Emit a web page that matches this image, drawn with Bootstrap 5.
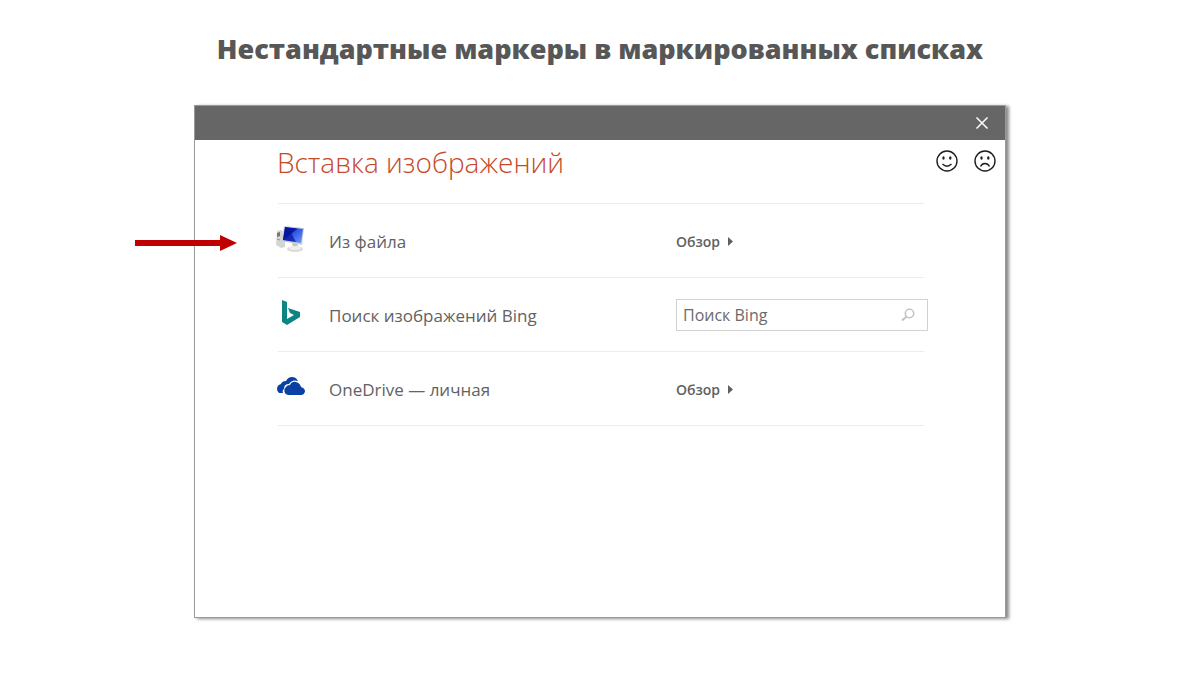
<!DOCTYPE html>
<html lang="ru">
<head>
<meta charset="utf-8">
<meta name="viewport" content="width=device-width, initial-scale=1">
<title>Нестандартные маркеры в маркированных списках</title>
<link href="https://cdn.jsdelivr.net/npm/bootstrap@5.3.0/dist/css/bootstrap.min.css" rel="stylesheet">
<style>
  body { font-family: "Open Sans", "Noto Sans", sans-serif; color: #626262; background: #fff; }
  .page-title { font-family: "Open Sans", sans-serif; font-weight: 800; font-size: 27px; line-height: 40px; color: #575757; margin-bottom: 36px; padding-top: 29px; }
  .insert-dialog { max-width: 812px; min-height: 513px; border: 1px solid #9a9a9a; box-shadow: 3px 1px 3px rgba(0, 0, 0, .45); }
  .title-bar { height: 34px; background: #666; }
  .plain-btn { border: 0; background: none; padding: 0; color: inherit; line-height: 0; }
  .dialog-title { font-weight: 300; font-size: 28px; line-height: 40px; color: #c8482a; }
  .dialog-head { padding: 2px 9px 0 82px; min-height: 63px; }
  .faces { gap: 16px; padding-top: 7px; color: #1c1c1c; }
  .sources { padding: 0 81px 0 83px; }
  .source-item { height: 74px; border-bottom: 1px solid #ececec; }
  .sources ul { border-top: 1px solid #ececec; }
  .source-icon { width: 53px; line-height: 0; margin-left: -2px; padding-bottom: 4px; }
  .source-name { font-size: 17px; line-height: 24px; padding-top: 2px; }
  .source-action { width: 248px; }
  .browse { font-weight: 600; font-size: 14px; line-height: 20px; color: #606060; gap: 8px; padding-top: 2px; }
  .search-box { width: 252px; height: 32px; border: 1px solid #d2d2d2; }
  .search-box input { border: 0; outline: 0; padding: 0 0 0 6px; font-size: 16px; line-height: 24px; min-width: 0; color: #6a6a6a; }
  .search-box input::placeholder { color: #6a6a6a; opacity: 1; }
  .pointer { left: -143px; top: 30px; }
</style>
</head>
<body>
<main class="container-fluid px-3 pb-4">
  <h1 class="page-title text-center">Нестандартные маркеры в маркированных списках</h1>
  <section class="insert-dialog mx-auto bg-white" aria-labelledby="dialogTitle">
    <div class="title-bar d-flex justify-content-end align-items-center pe-3">
      <button class="plain-btn text-white" type="button" aria-label="Закрыть">
        <svg width="14" height="14" viewBox="0 0 14 14"><path d="M1.500 1.500 12.500 12.500M12.500 1.500 1.500 12.500" stroke="currentColor" stroke-width="1.500" fill="none"/></svg>
      </button>
    </div>
    <div class="dialog-head d-flex justify-content-between align-items-start">
      <h2 id="dialogTitle" class="dialog-title mb-0">Вставка изображений</h2>
      <div class="faces d-flex">
        <button class="plain-btn" type="button" aria-label="Нравится">
          <svg width="22" height="24" viewBox="0 0 22 24" fill="none" stroke="currentColor" stroke-width="1.400"><circle cx="11" cy="12" r="10"/><ellipse cx="7.500" cy="9" rx="1.200" ry="1.700" fill="currentColor" stroke="none"/><ellipse cx="14.300" cy="9" rx="1.200" ry="1.700" fill="currentColor" stroke="none"/><path d="M6.500 15Q11 19.500 15.500 15"/></svg>
        </button>
        <button class="plain-btn" type="button" aria-label="Не нравится">
          <svg width="22" height="24" viewBox="0 0 22 24" fill="none" stroke="currentColor" stroke-width="1.400"><circle cx="11" cy="12" r="10"/><ellipse cx="7.500" cy="9" rx="1.200" ry="1.700" fill="currentColor" stroke="none"/><ellipse cx="14.300" cy="9" rx="1.200" ry="1.700" fill="currentColor" stroke="none"/><path d="M6.500 17.500Q8 14.500 11 14.500T15.500 17.500"/></svg>
        </button>
      </div>
    </div>
    <div class="sources">
      <ul class="list-unstyled mb-0">
        <li class="source-item d-flex align-items-center position-relative">
          <svg class="pointer position-absolute" width="102" height="18" viewBox="0 0 102 18" aria-hidden="true"><path d="M0 6H85V1L102 9 85 17V12H0Z" fill="#c00000"/></svg>
          <span class="source-icon">
            <svg width="29" height="28" viewBox="0 0 29 28">
              <defs><linearGradient id="screen" x1="0" y1="0" x2="1" y2="1"><stop offset="0" stop-color="#0a1fae"/><stop offset=".38" stop-color="#0818a0"/><stop offset=".45" stop-color="#2f55e8"/><stop offset="1" stop-color="#6d9af5"/></linearGradient></defs>
              <path d="M1 6 5 5 9 8V22L5 23 0 20Z" fill="#d5d5d2"/><path d="M1 8 4 7V11L1 12Z" fill="#76766f"/><path d="M1 14 4 15" stroke="#999"/>
              <ellipse cx="19" cy="24" rx="8" ry="3" fill="#d9d9d7"/><path d="M16 17 22 18 21 24H17Z" fill="#c4c5c8"/><ellipse cx="19" cy="23" rx="6" ry="2" fill="#eeeeec"/>
              <path d="M8 1 28 3 26 20 6 16Z" fill="#c9cedc"/><path d="M9 2 27 4 25 18 7 15Z" fill="url(#screen)"/><path d="M9 2 14 3Q16 11 20 17L7 15Z" fill="#08149a" opacity=".7"/>
            </svg>
          </span>
          <span class="source-name flex-grow-1">Из файла</span>
          <div class="source-action">
            <button class="plain-btn browse d-flex align-items-center" type="button">Обзор <svg width="5" height="9" viewBox="0 0 5 9"><path d="M0 0 5 4.500 0 9Z" fill="currentColor"/></svg></button>
          </div>
        </li>
        <li class="source-item d-flex align-items-center">
          <span class="source-icon">
            <svg width="29" height="28" viewBox="0 0 29 28"><path d="M6 1 11 3V20L18 16 14 14 12 9 24 13V18L11 26 6 23Z" fill="#0c8484"/></svg>
          </span>
          <label class="source-name flex-grow-1" for="bingQuery">Поиск изображений Bing</label>
          <div class="source-action">
            <form class="search-box d-flex align-items-center" onsubmit="return false">
              <input id="bingQuery" class="flex-grow-1 bg-transparent" type="text" placeholder="Поиск Bing">
              <button class="plain-btn pe-2 me-1" type="submit" aria-label="Найти"><svg width="14" height="14" viewBox="0 0 14 14" fill="none" stroke="#c3c3c3"><circle cx="8.500" cy="5.500" r="4.200" stroke-width="1.500"/><path d="M5.500 8.500 1 12.500" stroke-width="2"/></svg></button>
            </form>
          </div>
        </li>
        <li class="source-item d-flex align-items-center">
          <span class="source-icon">
            <svg width="29" height="28" viewBox="0 0 29 28"><path d="M3 20A5 5 0 0 1 1 16Q1 12 5 11 6 8 10 8 12 4 16 4 20 4 22 8 16 6 13 11 8 11 8 16 6 17 7 20Z" fill="#0a41a4"/><path d="M12 22A4.500 4.500 0 0 1 10 14Q11 12 14 12 16 8 20 9 24 10 25 14 29 15 29 18.500 28 22 25 22Z" fill="#0a41a4"/></svg>
          </span>
          <span class="source-name flex-grow-1">OneDrive — личная</span>
          <div class="source-action">
            <button class="plain-btn browse d-flex align-items-center" type="button">Обзор <svg width="5" height="9" viewBox="0 0 5 9"><path d="M0 0 5 4.500 0 9Z" fill="currentColor"/></svg></button>
          </div>
        </li>
      </ul>
    </div>
  </section>
</main>
<script src="https://cdn.jsdelivr.net/npm/bootstrap@5.3.0/dist/js/bootstrap.bundle.min.js"></script>
</body>
</html>
